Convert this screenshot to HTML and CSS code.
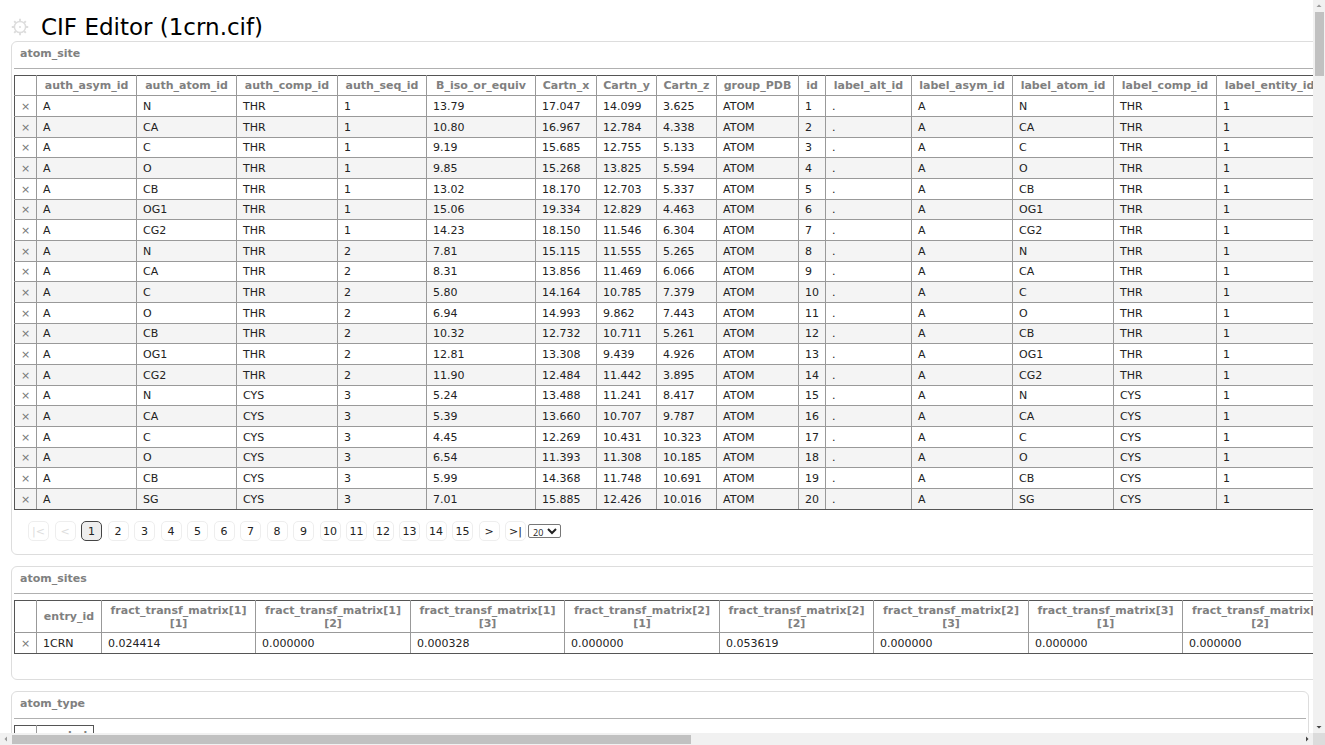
FILE: index.html
```html
<!DOCTYPE html>
<html lang="en">
<head>
<meta charset="utf-8">
<title>CIF Editor (1crn.cif)</title>
<link rel="stylesheet" href="styles.css">
</head>
<body>
<div class="window">
  <main class="pane">
    <header class="top">
      <button class="gear" type="button" aria-label="Settings">
        <svg viewBox="0 0 18 18" width="18" height="18" fill="none" stroke="currentColor">
          <circle cx="9" cy="9" r="5.6" stroke-width="1.5"/>
          <circle cx="9" cy="9" r="1" fill="currentColor" stroke="none"/>
          <path stroke-width="1.9" d="M9 .8v2.6M9 14.6v2.6M.8 9h2.6M14.6 9h2.6M3.2 3.2l1.8 1.8M13 13l1.8 1.8M14.8 3.2L13 5M5 13l-1.8 1.8"/>
        </svg>
      </button>
      <h1 class="title">CIF Editor (1crn.cif)</h1>
    </header>

    <section class="category category-wide">
      <h2 class="name">atom_site</h2>
      <table class="grid sites">
        <colgroup>
          <col class="w22"><col class="w100"><col class="w100"><col class="w101"><col class="w89"><col class="w109"><col class="w61"><col class="w60"><col class="w60"><col class="w82"><col class="w27"><col class="w86"><col class="w101"><col class="w101"><col class="w103"><col class="w106">
        </colgroup>
        <thead>
          <tr><th></th><th>auth_asym_id</th><th>auth_atom_id</th><th>auth_comp_id</th><th>auth_seq_id</th><th>B_iso_or_equiv</th><th>Cartn_x</th><th>Cartn_y</th><th>Cartn_z</th><th>group_PDB</th><th>id</th><th>label_alt_id</th><th>label_asym_id</th><th>label_atom_id</th><th>label_comp_id</th><th>label_entity_id</th></tr>
        </thead>
        <tbody id="atoms"></tbody>
      </table>
      <nav class="pager" aria-label="Pages">
        <div class="pages" id="pages"></div>
        <select class="size" aria-label="Rows per page"><option>20</option><option>50</option></select>
      </nav>
    </section>

    <section class="category category-wide">
      <h2 class="name">atom_sites</h2>
      <table class="grid">
        <colgroup>
          <col class="w22"><col class="w65"><col class="w154"><col class="w155"><col class="w154"><col class="w155"><col class="w154"><col class="w155"><col class="w154"><col class="w155">
        </colgroup>
        <thead>
          <tr class="tall"><th></th><th>entry_id</th><th>fract_transf_matrix[1]<br>[1]</th><th>fract_transf_matrix[1]<br>[2]</th><th>fract_transf_matrix[1]<br>[3]</th><th>fract_transf_matrix[2]<br>[1]</th><th>fract_transf_matrix[2]<br>[2]</th><th>fract_transf_matrix[2]<br>[3]</th><th>fract_transf_matrix[3]<br>[1]</th><th>fract_transf_matrix[3]<br>[2]</th></tr>
        </thead>
        <tbody>
          <tr><td><button class="del" type="button" aria-label="Delete row">×</button></td><td>1CRN</td><td>0.024414</td><td>0.000000</td><td>0.000328</td><td>0.000000</td><td>0.053619</td><td>0.000000</td><td>0.000000</td><td>0.000000</td></tr>
        </tbody>
      </table>
    </section>

    <section class="category">
      <h2 class="name">atom_type</h2>
      <table class="grid">
        <colgroup><col class="w22"><col class="w57"></colgroup>
        <thead><tr><th></th><th>symbol</th></tr></thead>
      </table>
    </section>
  </main>
  <div class="bar bar-v" aria-hidden="true"><i class="arrow up"></i><div class="track"><div class="thumb"></div></div><i class="arrow down"></i></div>
  <div class="bar bar-h" aria-hidden="true"><i class="arrow left"></i><div class="track"><div class="thumb"></div></div><i class="arrow right"></i></div>
  <div class="corner"></div>
</div>
<script src="script.js"></script>
</body>
</html>
```
FILE: styles.css
```css
* { box-sizing: border-box; }

body {
  margin: 0;
  background: #fff;
  color: #222;
  font: 11px/13px Verdana, "DejaVu Sans", sans-serif;
}

button { font: inherit; cursor: pointer; }

.window {
  display: grid;
  grid-template: minmax(0, 1fr) 12px / minmax(0, 1fr) 12px;
  height: 100vh;
}

.pane {
  overflow: hidden;
  padding: 13px 4px 0 11px;
}

/* Header */
.top {
  display: flex;
  align-items: center;
  gap: 12px;
  height: 28px;
}

.gear {
  display: flex;
  padding: 0;
  border: 0;
  background: none;
  color: #ddd;
}

.title {
  margin: 0;
  color: #000;
  font-size: 23px;
  font-weight: 400;
  line-height: 28px;
}

/* Categories */
.category {
  margin-bottom: 11px;
  padding: 0 2px 25px;
  border: 1px solid #ddd;
  border-radius: 6px;
}

.category-wide {
  width: max-content;
}

.category:first-of-type { padding-bottom: 13px; }

.name {
  margin: 0 0 6px;
  padding: 5px 6px 7px;
  border-bottom: 1px solid #b0b0b0;
  color: #808080;
  font-size: 11px;
  line-height: 14px;
}

/* Data tables */
.grid {
  border-collapse: collapse;
}

.grid th, .grid td {
  height: 21px;
  padding: 0 6px;
  border: 1px solid #999;
  text-align: left;
  white-space: nowrap;
}

.grid th {
  height: 20px;
  padding: 0;
  border-top-color: #555;
  color: #808080;
  text-align: center;
}

.grid .tall th { height: 32px; }

.grid td:first-child {
  padding: 0;
  text-align: center;
}

.grid th:first-child, .grid td:first-child { border-left-color: #555; }
.grid th:last-child, .grid td:last-child { border-right-color: #555; }
.grid tbody tr:last-child td { border-bottom-color: #555; }

.grid tbody tr:nth-child(even) { background: #f4f4f4; }
.sites tbody tr:nth-child(3n) td { height: 20px; }

.del {
  padding: 0;
  border: 0;
  background: none;
  color: #777;
}

.w22 { width: 22px; }
.w27 { width: 27px; }
.w57 { width: 57px; }
.w60 { width: 60px; }
.w61 { width: 61px; }
.w65 { width: 65px; }
.w82 { width: 82px; }
.w86 { width: 86px; }
.w89 { width: 89px; }
.w100 { width: 100px; }
.w101 { width: 101px; }
.w103 { width: 103px; }
.w106 { width: 106px; }
.w109 { width: 109px; }
.w154 { width: 154px; }
.w155 { width: 155px; }

/* Pager */
.pager {
  display: flex;
  align-items: center;
  gap: 2px;
  margin-top: 11px;
  padding-left: 14px;
}

.pages {
  display: flex;
  justify-content: space-between;
  width: 498px;
}

.page {
  width: 21px;
  height: 20px;
  padding: 0;
  border: 1px solid #eee;
  border-radius: 5px;
  background: #fff;
  color: #222;
  white-space: nowrap;
}

.page:disabled { color: #ddd; }

.page.current {
  border-color: #444;
  background: #eee;
}

.size {
  width: 33px;
  height: 14px;
  padding: 0;
  border: 1px solid #777;
  border-radius: 2px;
  background: #fff;
  color: #222;
  font: 9px/12px "Open Sans", sans-serif;
}

/* Scroll bars */
.bar {
  display: flex;
  align-items: center;
  background: #f1f1f1;
}

.bar-v { flex-direction: column; }

.track {
  display: flex;
  flex: 1;
}

.bar-v .track { flex-direction: column; width: 9px; }
.bar-h .track { height: 9px; }

.thumb { background: #c1c1c1; }
.bar-v .thumb { height: 9%; }
.bar-h .thumb { width: 52.7%; }

.arrow {
  display: flex;
  align-items: center;
  justify-content: center;
  width: 12px;
  height: 12px;
}

.arrow::before {
  content: "";
  width: 6px;
  height: 3px;
  background: #444;
  clip-path: polygon(0 0, 100% 0, 50% 100%);
}

.up::before, .left::before { background: #999; }
.up { transform: rotate(180deg); }
.left { transform: rotate(90deg); }
.right { transform: rotate(-90deg); }

.corner { background: #dcdcdc; }
```
FILE: script.js
```js
const atoms = [
  ["N", "THR", 1, "13.79", "17.047", "14.099", "3.625"],
  ["CA", "THR", 1, "10.80", "16.967", "12.784", "4.338"],
  ["C", "THR", 1, "9.19", "15.685", "12.755", "5.133"],
  ["O", "THR", 1, "9.85", "15.268", "13.825", "5.594"],
  ["CB", "THR", 1, "13.02", "18.170", "12.703", "5.337"],
  ["OG1", "THR", 1, "15.06", "19.334", "12.829", "4.463"],
  ["CG2", "THR", 1, "14.23", "18.150", "11.546", "6.304"],
  ["N", "THR", 2, "7.81", "15.115", "11.555", "5.265"],
  ["CA", "THR", 2, "8.31", "13.856", "11.469", "6.066"],
  ["C", "THR", 2, "5.80", "14.164", "10.785", "7.379"],
  ["O", "THR", 2, "6.94", "14.993", "9.862", "7.443"],
  ["CB", "THR", 2, "10.32", "12.732", "10.711", "5.261"],
  ["OG1", "THR", 2, "12.81", "13.308", "9.439", "4.926"],
  ["CG2", "THR", 2, "11.90", "12.484", "11.442", "3.895"],
  ["N", "CYS", 3, "5.24", "13.488", "11.241", "8.417"],
  ["CA", "CYS", 3, "5.39", "13.660", "10.707", "9.787"],
  ["C", "CYS", 3, "4.45", "12.269", "10.431", "10.323"],
  ["O", "CYS", 3, "6.54", "11.393", "11.308", "10.185"],
  ["CB", "CYS", 3, "5.99", "14.368", "11.748", "10.691"],
  ["SG", "CYS", 3, "7.01", "15.885", "12.426", "10.016"]
];

const body = document.getElementById("atoms");
atoms.forEach(([atom, comp, seq, b, x, y, z], i) => {
  const row = body.insertRow();
  const del = document.createElement("button");
  del.type = "button";
  del.className = "del";
  del.textContent = "×";
  del.setAttribute("aria-label", "Delete row");
  row.insertCell().append(del);
  ["A", atom, comp, seq, b, x, y, z, "ATOM", i + 1, ".", "A", atom, comp, 1]
    .forEach(value => { row.insertCell().textContent = value; });
});

const pages = document.getElementById("pages");
const labels = ["|<", "<", ...Array.from({ length: 15 }, (_, i) => i + 1), ">", ">|"];
labels.forEach((label, i) => {
  const page = document.createElement("button");
  page.type = "button";
  page.className = "page";
  page.textContent = label;
  page.disabled = i < 2;
  if (label === 1) {
    page.classList.add("current");
    page.setAttribute("aria-current", "page");
  }
  pages.append(page);
});
```
